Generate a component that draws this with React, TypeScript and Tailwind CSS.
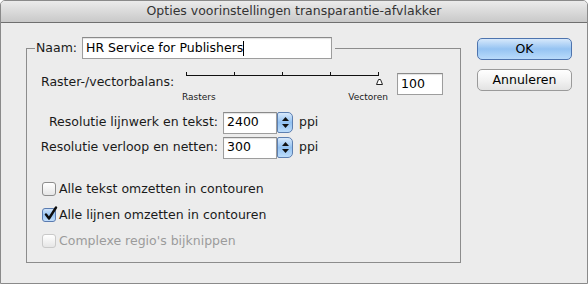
import type { ReactNode } from 'react'

const font = { fontFamily: "'DejaVu Sans', 'Liberation Sans', sans-serif" }

function TextBox({ value, className, caret }: { value: string; className: string; caret?: boolean }) {
  return (
    <div
      className={`flex items-center h-[22px] bg-white border border-[#9d9d9d] border-t-[#8a8a8a] shadow-[inset_0_1px_1px_rgba(0,0,0,0.12)] px-[3px] text-[12.5px] text-black ${className}`}
    >
      <span>{value}</span>
      {caret && <span className="w-px h-[15px] bg-black" />}
    </div>
  )
}

function Stepper() {
  return (
    <div className="w-[16px] h-[21px] rounded-r-[5px] rounded-l-[2px] border border-[#5d7fb0] bg-gradient-to-b from-[#d8e9fb] via-[#92c1f1] to-[#bcdcfa] flex flex-col items-center justify-center gap-[3px]">
      <svg width="7" height="4" viewBox="0 0 7 4"><path d="M3.5 0 L7 4 L0 4 Z" fill="#111" /></svg>
      <svg width="7" height="4" viewBox="0 0 7 4"><path d="M0 0 L7 0 L3.5 4 Z" fill="#111" /></svg>
    </div>
  )
}

function ResRow({ label, value, className }: { label: string; value: string; className: string }) {
  return (
    <div className={`flex items-center h-[21px] ${className}`}>
      <div className="w-[191px] text-right text-[12.5px] text-[#1a1a1a]">{label}</div>
      <TextBox value={value} className="ml-[5px] w-[54px] h-[21px]" />
      <Stepper />
      <span className="ml-[6px] text-[12.5px] text-[#1a1a1a]">ppi</span>
    </div>
  )
}

function Check({ checked, disabled, children, className }: { checked?: boolean; disabled?: boolean; children: ReactNode; className: string }) {
  return (
    <div className={`flex items-center h-[16px] pl-[15px] ${className}`}>
      {checked ? (
        <div className="relative w-[14px] h-[14px] rounded-[3px] border border-[#5a7bb0] bg-gradient-to-b from-[#cfe3fa] via-[#98c4f1] to-[#c3defa]">
          <svg className="absolute left-[1px] -top-[3px]" width="14" height="15" viewBox="0 0 14 15">
            <path d="M2 8.5 L5 12.5 L12 1.5" fill="none" stroke="#0d0d0d" strokeWidth="2.4" strokeLinecap="round" strokeLinejoin="round" />
          </svg>
        </div>
      ) : (
        <div
          className={`w-[14px] h-[14px] rounded-[3px] border bg-gradient-to-b from-white to-[#e6e6e6] ${disabled ? 'border-[#c9c9c9]' : 'border-[#8d8d8d]'}`}
        />
      )}
      <span className={`ml-[3px] text-[12.5px] ${disabled ? 'text-[#9b9b9b]' : 'text-[#1a1a1a]'}`}>{children}</span>
    </div>
  )
}

function Slider() {
  return (
    <div className="relative w-[206px] h-[30px]">
      <svg className="absolute left-0 top-0" width="206" height="14" viewBox="0 0 206 14">
        <line x1="4" y1="3.5" x2="197" y2="3.5" stroke="#111" strokeWidth="1" />
        {[4.5, 52.5, 100.5, 148.5, 196.5].map(x => (
          <line key={x} x1={x} y1="0" x2={x} y2="4" stroke="#111" strokeWidth="1" />
        ))}
        <path d="M194.5 12.5 L196.5 7.5 L198.5 7.5 L200.5 12.5 Z" fill="#fff" stroke="#222" strokeWidth="1" strokeLinejoin="round" />
      </svg>
      <div className="absolute left-0 right-0 top-[19px] flex justify-between text-[9px] leading-[12px] text-[#1a1a1a]">
        <span>Rasters</span>
        <span>Vectoren</span>
      </div>
    </div>
  )
}

export default function App() {
  return (
    <div
      className="w-[588px] h-[284px] overflow-hidden bg-[#ececec] border border-[#8a8a8a] rounded-t-[5px] flex flex-col"
      style={font}
    >
      <div className="h-[22px] shrink-0 flex items-center justify-center border-b border-[#6f6f6f] bg-gradient-to-b from-[#ebebeb] to-[#c9c9c9] text-[12.5px] text-[#333]">
        Opties voorinstellingen transparantie-afvlakker
      </div>

      <div className="flex items-start">
        <fieldset className="ml-[25px] mt-[14px] w-[435px] h-[226px] border border-[#8c8c8c]">
          <legend className="ml-[8px] px-[1px] flex items-center">
            <span className="text-[12.5px] text-[#1a1a1a]">Naam:</span>
            <TextBox value="HR Service for Publishers" caret className="ml-[5px] w-[250px]" />
            <span className="w-[2px]" />
          </legend>

          <div className="flex items-start mt-[13px] pl-[14px]">
            <span className="mt-[2px] w-[141px] text-[12.5px] leading-[16px] text-[#1a1a1a]">Raster-/vectorbalans:</span>
            <Slider />
            <TextBox value="100" className="mt-[1px] ml-[9px] w-[46px] h-[21px]" />
          </div>

          <ResRow label="Resolutie lijnwerk en tekst:" value="2400" className="mt-[10px]" />
          <ResRow label="Resolutie verloop en netten:" value="300" className="mt-[4px]" />

          <Check className="mt-[23px]">Alle tekst omzetten in contouren</Check>
          <Check checked className="mt-[10px]">Alle lijnen omzetten in contouren</Check>
          <Check disabled className="mt-[10px]">Complexe regio's bijknippen</Check>
        </fieldset>

        <div className="ml-[16px] mt-[15px] flex flex-col gap-[9px]">
          <button className="w-[95px] h-[22px] rounded-[5px] border border-[#4e74ae] bg-gradient-to-b from-[#d6e8fb] via-[#95c3f2] to-[#b9dbfb] text-[12.5px] text-black">
            OK
          </button>
          <button className="w-[95px] h-[22px] rounded-[5px] border border-[#9a9a9a] bg-gradient-to-b from-white via-[#f3f3f3] to-[#e3e3e3] text-[12.5px] text-black">
            Annuleren
          </button>
        </div>
      </div>
    </div>
  )
}
